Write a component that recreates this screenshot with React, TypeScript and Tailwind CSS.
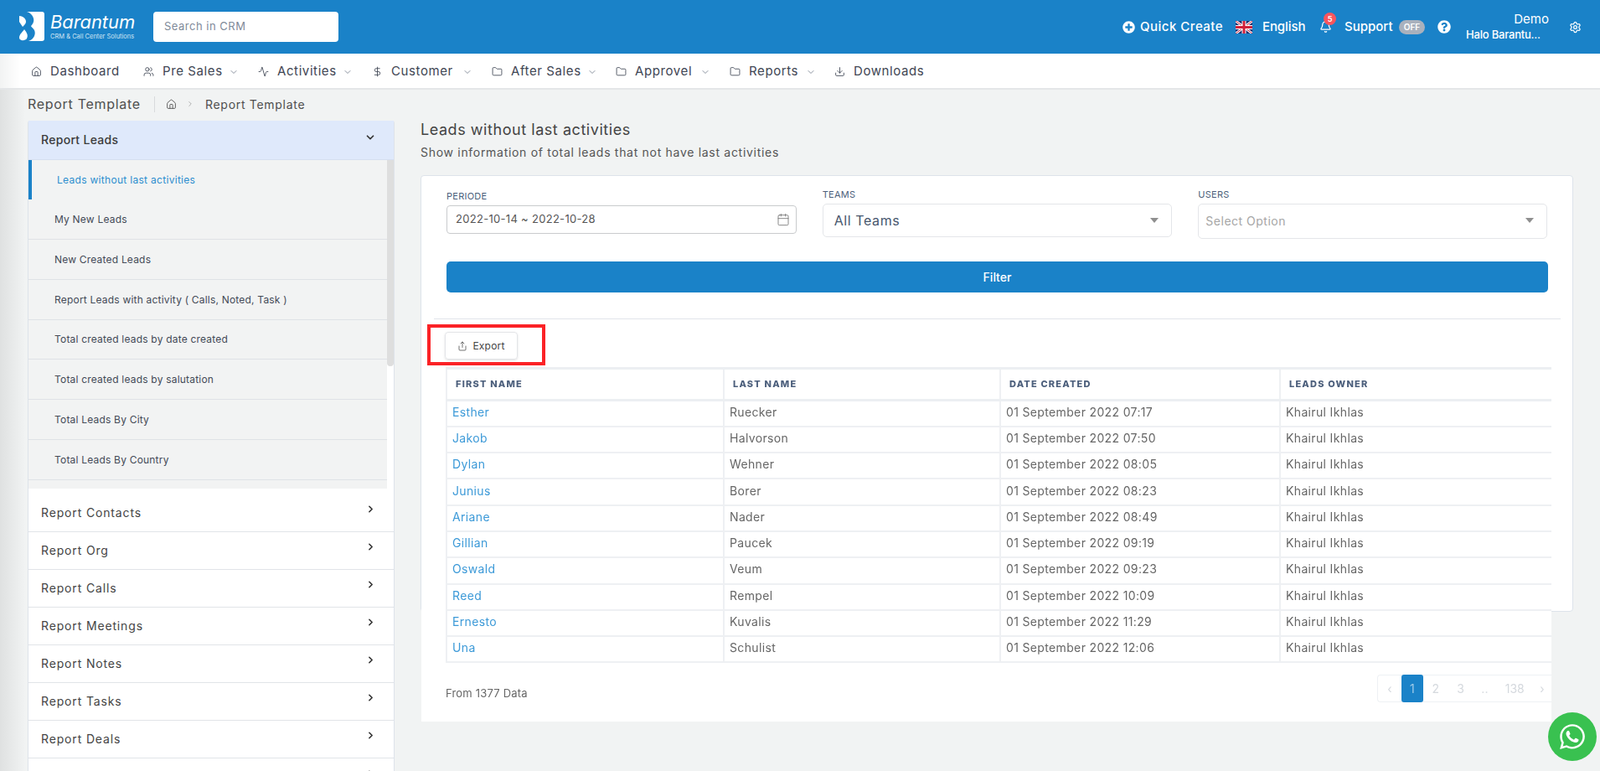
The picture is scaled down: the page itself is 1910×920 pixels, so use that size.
import React from "react";
import { House, Users, Activity, DollarSign, Folder, Download, ChevronDown, ChevronRight, Settings, Bell, Calendar, Share } from "lucide-react";
import { FaPlusCircle, FaQuestionCircle, FaWhatsapp } from "react-icons/fa";

const nav = [
  { Icon: House, label: "Dashboard", w: "w-[134px]", tw: "w-[84px]", chev: false },
  { Icon: Users, label: "Pre Sales", w: "w-[137px]", tw: "w-[68px]", chev: true },
  { Icon: Activity, label: "Activities", w: "w-[136px]", tw: "w-[67px]", chev: true },
  { Icon: DollarSign, label: "Customer", w: "w-[143px]", tw: "w-[74px]", chev: true },
  { Icon: Folder, label: "After Sales", w: "w-[148px]", tw: "w-[80px]", chev: true },
  { Icon: Folder, label: "Approvel", w: "w-[136px]", tw: "w-[67px]", chev: true },
  { Icon: Folder, label: "Reports", w: "w-[125px]", tw: "w-[57px]", chev: true },
  { Icon: Download, label: "Downloads", w: "w-[125px]", tw: "w-[84px]", chev: false },
];

const leadItems = [
  { t: "My New Leads", h: "h-[48px]" },
  { t: "New Created Leads", h: "h-[48px]" },
  { t: "Report Leads with activity ( Calls, Noted, Task )", h: "h-[48px]" },
  { t: "Total created leads by date created", h: "h-[47px]" },
  { t: "Total created leads by salutation", h: "h-[48px]" },
  { t: "Total Leads By City", h: "h-[48px]" },
  { t: "Total Leads By Country", h: "h-[48px]" },
];

const reports = ["Report Contacts", "Report Org", "Report Calls", "Report Meetings", "Report Notes", "Report Tasks", "Report Deals"];

const rows = [
  ["Esther", "Ruecker", "01 September 2022 07:17"],
  ["Jakob", "Halvorson", "01 September 2022 07:50"],
  ["Dylan", "Wehner", "01 September 2022 08:05"],
  ["Junius", "Borer", "01 September 2022 08:23"],
  ["Ariane", "Nader", "01 September 2022 08:49"],
  ["Gillian", "Paucek", "01 September 2022 09:19"],
  ["Oswald", "Veum", "01 September 2022 09:23"],
  ["Reed", "Rempel", "01 September 2022 10:09"],
  ["Ernesto", "Kuvalis", "01 September 2022 11:29"],
  ["Una", "Schulist", "01 September 2022 12:06"],
];

function Logo() {
  return (
    <svg width="30" height="35" viewBox="0 0 30 35" fill="#fff">
      <path d="M9 0H27a3 3 0 0 1 3 3V32a3 3 0 0 1-3 3H11C18 33 20 26 18 22C16 19 14 18 14 17C16 15 18 12 17 8C16 4 13 1 9 0Z" />
      <path d="M0 5C4 5 8 8 8 12C8 14 6 16 4 18L0 12Z" />
      <path d="M6 21C9 25 11 28 9 32C7 35 0 35 0 31C0 27 4 24 6 21Z" />
    </svg>
  );
}

function Flag() {
  return (
    <svg width="20" height="15" viewBox="0 0 60 45">
      <rect width="60" height="45" fill="#1f2f6e" />
      <path d="M0 0L60 45M60 0L0 45" stroke="#fff" strokeWidth="9" />
      <path d="M0 0L60 45M60 0L0 45" stroke="#d0203a" strokeWidth="3" />
      <path d="M30 0V45M0 22.5H60" stroke="#fff" strokeWidth="15" />
      <path d="M30 0V45M0 22.5H60" stroke="#d0203a" strokeWidth="9" />
    </svg>
  );
}

function Caret() {
  return <div className="w-0 h-0 border-x-[5px] border-x-transparent border-t-[6px] border-t-[#8f8f8f]" />;
}

function Header() {
  return (
    <header className="h-16 bg-[#1a82c8] flex items-center text-white shrink-0">
      <div className="ml-[23px] mt-[-1px]"><Logo /></div>
      <div className="ml-[7px] w-[100px] mt-[-2px]">
        <div className="[font-family:'Liberation_Sans',sans-serif] italic text-[22px] leading-[26px] tracking-[-0.1px]">Barantum</div>
        <div className="[font-family:'Liberation_Sans',sans-serif] text-[7.5px] leading-[10px] whitespace-nowrap text-[#cfe4f3]">CRM &amp; Call Center Solutions</div>
      </div>
      <div className="ml-[23px] w-[221px] h-9 bg-white rounded-[4px] flex items-center pl-[13px] text-[13px] text-[#7f8a99] tracking-[0.5px]">Search in CRM</div>
      <div className="flex-1" />
      <FaPlusCircle className="w-[15px] h-[15px]" />
      <span className="ml-[6px] w-[99px] text-[15px] whitespace-nowrap font-medium tracking-[0.5px]">Quick Create</span>
      <div className="ml-[15px]"><Flag /></div>
      <span className="ml-[12px] w-[52px] text-[15px] font-medium tracking-[-0.1px]">English</span>
      <div className="relative ml-[16px] w-[15px] h-[16px]">
        <Bell className="w-[15px] h-[16px]" strokeWidth={2} />
        <span className="absolute -top-[9px] left-[5px] w-[15px] h-[15px] rounded-full bg-[#f9555d] text-[9px] font-semibold flex items-center justify-center">5</span>
      </div>
      <span className="ml-[15px] w-[60px] text-[15px] font-medium">Support</span>
      <span className="ml-[5px] w-[31px] h-[17px] rounded-full bg-[#a9b1bd] text-[10px] font-semibold flex items-center justify-center">OFF</span>
      <FaQuestionCircle className="ml-[15px] w-4 h-4" />
      <div className="ml-[18px] w-[99px] mt-[-2px]">
        <div className="text-[15px] leading-5 text-right font-normal">Demo</div>
        <div className="text-[13px] leading-[16px] font-medium whitespace-nowrap tracking-[-0.2px]">Halo Barantu...</div>
      </div>
      <Settings className="ml-[24px] mr-[22px] w-[15px] h-[15px]" strokeWidth={2} />
    </header>
  );
}

function Nav() {
  return (
    <nav className="h-[43px] pt-[2px] bg-[linear-gradient(90deg,#f2f3f3_0px,#ffffff_24px)] border-b-2 border-[#e4e6e8] flex items-center pl-[37px] shrink-0 text-[#3f4654]">
      {nav.map(({ Icon, label, w, tw, chev }) => (
        <div key={label} className={`${w} flex items-center`}>
          <Icon className="w-[13px] h-[13px] mr-[10px] shrink-0" strokeWidth={1.6} />
          <span className={`${tw} text-[15px] whitespace-nowrap tracking-[0.6px]`}>{label}</span>
          {chev && <ChevronDown className="ml-[11px] w-3 h-3 text-[#8b93a0]" strokeWidth={2} />}
        </div>
      ))}
    </nav>
  );
}

function Sidebar() {
  return (
    <aside className="w-[438px] ml-[33px] shrink-0 bg-white border-x border-[#dde3ea] rounded-t-[3px]">
      <div className="h-[47px] pb-[2px] bg-[#dfe9fb] border-b border-[#d5dff0] flex items-center justify-between pl-[15px] pr-[21px] text-[14px] font-medium text-[#3b3b3b] tracking-[0.3px]">
        <span>Report Leads</span>
        <ChevronDown className="w-[14px] h-[14px] -mt-1 text-[#333]" strokeWidth={3} />
      </div>
      <div className="flex h-[392px]">
        <div className="w-[429px] bg-[#f2f3f3] overflow-hidden text-[12px] text-[#444a57]">
          <div className="h-[47px] border-l-4 border-[#1a82c8] flex items-center pl-[30px] text-[#2d8ecf] tracking-[0.3px]">Leads without last activities</div>
          {leadItems.map(({ t, h }) => (
            <div key={t} className={`${h} border-b border-[#dfe2e6] flex items-center pl-[31px] tracking-[0.2px]`}>{t}</div>
          ))}
        </div>
        <div className="w-[8px] h-[246px] bg-[#dedede] rounded-b-[4px]" />
      </div>
      <div className="h-[7px]" />
      {reports.map((t) => (
        <div key={t} className="h-[45px] pb-[2px] border-b border-[#e1e4e8] flex items-center justify-between pl-[15px] pr-[21px] text-[14px] text-[#444] tracking-[0.85px]">
          <span>{t}</span>
          <ChevronRight className="w-[13px] h-[13px] -mt-2 text-[#333]" strokeWidth={3} />
        </div>
      ))}
      <div className="h-[45px] flex items-center justify-end pr-[21px]">
        <ChevronRight className="w-[13px] h-[13px] -mt-2 text-[#333]" strokeWidth={3} />
      </div>
    </aside>
  );
}

function Field({ label, className, children }: { label: string; className: string; children: React.ReactNode }) {
  return (
    <div className={className}>
      <div className="text-[11px] leading-[14px] text-[#4d5f7b] uppercase tracking-[0.25px]">{label}</div>
      {children}
    </div>
  );
}

function Filters() {
  return (
    <div className="h-[170px] pl-[30px] pr-[30px] shrink-0">
      <div className="flex items-start pt-[15px]">
        <Field label="Periode" className="w-[418px] pt-[2px]">
          <div className="mt-[4px] h-[34px] border border-[#c9cbcd] rounded-[4px] flex items-center justify-between pl-[10px] pr-[7px] text-[13px] text-[#555] tracking-[0.3px]">
            <span>2022-10-14 ~ 2022-10-28</span>
            <Calendar className="w-[16px] h-[16px] text-[#777]" strokeWidth={1.3} />
          </div>
        </Field>
        <Field label="Teams" className="ml-[31px] w-[418px]">
          <div className="mt-[4px] h-[40px] pb-[1px] border border-[#e4e6e9] rounded-[5px] flex items-center justify-between pl-[13px] pr-[15px] text-[16px] text-[#47566d] tracking-[0.6px]">
            <span>All Teams</span>
            <Caret />
          </div>
        </Field>
        <Field label="Users" className="ml-[31px] w-[417px]">
          <div className="mt-[4px] h-[42px] pb-[1px] border border-[#e4e6e9] rounded-[5px] flex items-center justify-between pl-[8px] pr-[15px] text-[14px] text-[#a6a6a6] tracking-[0.5px]">
            <span>Select Option</span>
            <div className="-mt-[2px]"><Caret /></div>
          </div>
        </Field>
      </div>
      <div className="mt-[27px] h-[37px] bg-[#1a82c8] rounded-[5px] flex items-center justify-center text-white text-[14px] font-medium w-[1315px]">Filter</div>
    </div>
  );
}

function Results() {
  return (
    <div className="w-[1349px] h-[481px] bg-white shrink-0">
      <div className="ml-[15px] h-[1px] w-[1345px] bg-[#e1e5ea]" />
      <div className="relative ml-[28px] mt-[15px] w-[87px] h-[33px] border border-[#e3e5e8] rounded-[4px] shadow-sm flex items-center justify-center gap-[6px] text-[12px] text-[#444] tracking-[0.2px]">
        <Share className="w-[12px] h-[12px]" strokeWidth={1.5} />
        <span>Export</span>
        <div className="absolute -left-[22px] -top-[10px] w-[141px] h-[49px] border-[4px] border-[#fb2226]" />
      </div>
      <div className="blur-[0.45px]">
        <table className="ml-[29px] mt-[9px] w-[1319px] table-fixed border-collapse border-l-2 border-[#eef0f3]">
          <colgroup>
            <col className="w-[331px]" />
            <col className="w-[330px]" />
            <col className="w-[334px]" />
            <col className="w-[324px]" />
          </colgroup>
          <thead>
            <tr className="h-[38px] border-t-[3px] border-b-[3px] border-[#eceff2]">
              {["First Name", "Last Name", "Date Created", "Leads Owner"].map((h, i) => (
                <th key={h} className={`text-left pl-[10px] pb-[1px] text-[11px] font-extrabold uppercase tracking-[1.2px] text-[#4c5f7c] ${i ? "border-l-2 border-[#eef0f3]" : ""}`}>{h}</th>
              ))}
            </tr>
          </thead>
          <tbody className="text-[14px] text-[#666] tracking-[0.35px]">
            {rows.map((r) => (
              <tr key={r[0]} className="h-[31.3px] border-b-2 border-[#eef0f3]">
                <td className="pl-[6px] pb-[4px] text-[#3d9ad8]">{r[0]}</td>
                <td className="pl-[6px] pb-[4px] border-l-2 border-[#eef0f3]">{r[1]}</td>
                <td className="pl-[6px] pb-[4px] border-l-2 border-[#eef0f3]">{r[2]}</td>
                <td className="pl-[6px] pb-[4px] border-l-2 border-[#eef0f3]">Khairul Ikhlas</td>
              </tr>
            ))}
          </tbody>
        </table>
        <div className="ml-[29px] mt-[14px] flex items-start justify-between">
          <span className="mt-[14px] text-[13px] leading-[16px] text-[#666] tracking-[0.2px]">From 1377 Data</span>
          <div className="h-[33px] w-[208px] border border-r-0 border-[#eef1f4] rounded-l-[4px] flex items-center text-[14px] text-[#d5d9de]">
            <span className="w-[28px] text-center">‹</span>
            <span className="w-[26px] h-[33px] bg-[#1a82c8] text-[#9fcbe8] rounded-[3px] flex items-center justify-center">1</span>
            <span className="w-[30px] text-center">2</span>
            <span className="w-[30px] text-center">3</span>
            <span className="w-[28px] text-center">..</span>
            <span className="w-[44px] text-center">138</span>
            <span className="w-[22px] text-center">›</span>
          </div>
        </div>
      </div>
    </div>
  );
}

function Main() {
  return (
    <main className="ml-[31px] w-[1376px] shrink-0">
      <h1 className="h-[22px] text-[18px] leading-[22px] font-normal text-[#444] tracking-[0.55px] whitespace-nowrap">Leads without last activities</h1>
      <p className="h-[43px] text-[14px] leading-[32px] text-[#555] tracking-[0.7px] whitespace-nowrap">Show information of total leads that not have last activities</p>
      <div className="h-[521px] bg-white border border-[#dde3ea] rounded-[4px] flex flex-col">
        <Filters />
        <Results />
      </div>
    </main>
  );
}

export default function App() {
  return (
    <div className="relative w-[1910px] h-[920px] overflow-hidden bg-[#f1f3f3] [font-family:Inter,sans-serif] flex flex-col">
      <Header />
      <Nav />
      <div className="flex-1 min-h-0 bg-[linear-gradient(90deg,#dfe1e1_0px,#f1f3f3_30px)]">
        <div className="h-[37px] pb-[3px] ml-[33px] flex items-center text-[#4f4f4f]">
          <span className="text-[16px] w-[135px] whitespace-nowrap tracking-[0.7px]">Report Template</span>
          <span className="ml-[16px] w-px h-[19px] bg-[#d8dadc]" />
          <House className="ml-[13px] w-[13px] h-[13px]" strokeWidth={1.6} />
          <ChevronRight className="ml-[11px] w-[10px] h-[10px] text-[#888]" strokeWidth={1.5} />
          <span className="ml-[13px] text-[14px] whitespace-nowrap tracking-[0.7px]">Report Template</span>
        </div>
        <div className="flex items-start">
          <Sidebar />
          <Main />
        </div>
      </div>
      <div className="absolute left-[1848px] top-[850px] w-[58px] h-[58px] rounded-full bg-[#39c150] flex items-center justify-center text-white">
        <FaWhatsapp className="w-[34px] h-[34px]" />
      </div>
    </div>
  );
}
